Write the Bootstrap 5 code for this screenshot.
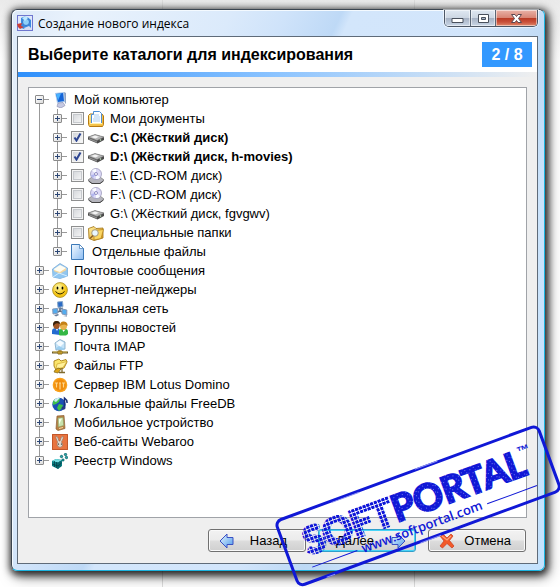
<!DOCTYPE html>
<html lang="ru">
<head>
<meta charset="utf-8">
<meta name="viewport" content="width=device-width, initial-scale=1">
<title>Создание нового индекса</title>
<link href="https://cdn.jsdelivr.net/npm/bootstrap@5.3.0/dist/css/bootstrap.min.css" rel="stylesheet">
<style>
body{font-family:"Liberation Sans",Arial,sans-serif;font-size:13px;line-height:19px;color:#000;padding:9px 15px 16px 11px;overflow:hidden;
 background:linear-gradient(90deg,transparent 162px,#ddd 162px,#ddd 163px,transparent 163px,transparent 414px,#ddd 414px,#ddd 415px,transparent 415px) no-repeat,linear-gradient(#eaeaea,#fff 60px,#fff)}
.win{border:1px solid #3b4550;border-right-color:#1bb4e0;border-bottom-color:#1bb4e0;border-radius:6px;padding:0 6px 6px 5px;
 background:linear-gradient(115deg,#dce9f8 0,#e9f2fc 60px,#dbeafb 200px,#cfe3fa 250px,#bed9f6 300px,#d3e6fb 310px,#d2e5fb 440px,#bdd9f5 500px,#cbe3fb 560px,#c4e2fd 100%);
 box-shadow:inset 1px 1px 0 #f4faff,1px 2px 7px 2px rgba(0,0,0,.72),3px 5px 14px rgba(0,0,0,.55)}
.titlebar{height:26px;font-family:"Open Sans","Noto Sans",sans-serif;font-size:12px}
.app{margin-right:5px}
.caps{height:17px;border:1px solid #4c5766;border-top:0;border-radius:0 0 5px 5px;overflow:hidden;box-shadow:0 0 0 1px rgba(255,255,255,.55)}
.caps button{border:0;padding:0;width:25px;background:linear-gradient(#dfe8f2,#cdd7e3 48%,#a5b1c3 50%,#c9d6e6);box-shadow:inset 0 0 0 1px rgba(255,255,255,.5)}
.caps button+button{border-left:1px solid #5a6676}
.caps .shut{width:42px;background:linear-gradient(#e9b3a8,#d88575 48%,#b83a24 50%,#c9503a 75%,#e08a6c)}
.pane{border:1px solid #5f6b79;background:#efefef}
.head{background:#fff;height:35px;padding:0 5px 0 10px}
.head h1{font-size:16px;line-height:24px}
.step{background:#39f;color:#fff;font-size:16px;line-height:25px;width:50px}
.stripe{height:5px;background:linear-gradient(90deg,#2f90fb,#8cc4ff 50%,#efefef)}
.work{padding:10px}
.tree{border:1px solid #a0a3a8;background:#fff;padding:2px 6px;min-height:300px}
.tree ul{list-style:none;margin:0;padding:0}
.tree ul ul{padding-left:18px;background:linear-gradient(#999,#999) 4px 0/1px 100% no-repeat}
.line{height:19px;font-size:13px;line-height:18px}
.knot{width:17px;height:19px;flex:none;padding-top:5px;background:linear-gradient(#999,#999) 4px 0/1px 19px no-repeat,linear-gradient(#999,#999) 4px 9px/10px 1px no-repeat}
.root>li:first-child>.line .knot{background-position:4px 9px,4px 9px}
.root>li:last-child .knot,.root ul li:last-child .knot{background-size:1px 9px,10px 1px}
.root>li:first-child>ul>li:first-child>.line .knot{background-position:4px 0,4px 9px}
.fold{width:9px;height:9px;border:1px solid #8b8b8b;border-radius:1px;padding:0;display:block;
 background:linear-gradient(#2c4674,#2c4674) 1px 3px/5px 1px no-repeat,linear-gradient(#2c4674,#2c4674) 3px 1px/1px 5px no-repeat,linear-gradient(135deg,#fff,#dcdcdc)}
.fold.open{background:linear-gradient(#2c4674,#2c4674) 1px 3px/5px 1px no-repeat,linear-gradient(135deg,#fff,#dcdcdc)}
.tick{appearance:none;width:13px;height:13px;margin:0 4px 0 1px;flex:none;border:1px solid #8e8f8f;box-shadow:inset 0 0 0 1px #f4f4f4,inset 0 0 0 2px #c6c9cd;background:linear-gradient(135deg,#cfd2d6,#fbfbfb)}
.tick:checked{box-shadow:inset 0 0 0 1px #f4f4f4;background:url("data:image/svg+xml,%3Csvg xmlns='http://www.w3.org/2000/svg' viewBox='0 0 11 11'%3E%3Cpath d='M2.500 5.500 4.500 8.500 8.500 1.500' fill='none' stroke='%232d4591' stroke-width='2'/%3E%3C/svg%3E"),linear-gradient(135deg,#cfd2d6,#fbfbfb)}
.pic{width:16px;height:16px;flex:none;margin-right:6px}
.foot{padding:1px 11px 11px}
.cmd{width:98px;height:23px;border:1px solid #707070;border-radius:3px;padding:0 14px 0 10px;font-size:13px;line-height:19px;color:#000;background:linear-gradient(#f2f2f2,#ebebeb 49%,#dddddd 51%,#cfcfcf);box-shadow:inset 0 0 0 1px #fafafa}
.cmd.next{border-color:#2f9fcb;box-shadow:inset 0 0 0 1px #48d4f7;padding:0 9px 0 17px}
.cmd.back{padding-right:18px}
.stamp{position:absolute;right:0;bottom:0;width:290px;height:167px;pointer-events:none}
.stamp .big{font-family:"Lato",sans-serif;font-weight:700;font-size:37px}
.stamp .site{font-family:"Open Sans",sans-serif;font-weight:600;font-size:13px}
.stamp .mark-tm{font-family:"Liberation Sans",sans-serif;font-weight:700;font-size:13px}
</style>
<script src="https://cdn.jsdelivr.net/npm/bootstrap@5.3.0/dist/js/bootstrap.bundle.min.js"></script>
</head>
<body class="d-flex flex-column min-vh-100 position-relative">
<svg width="0" height="0" class="position-absolute" aria-hidden="true">
<defs>
<linearGradient id="gb" x2="1" y2="1"><stop stop-color="#e8f6ff"/><stop offset="1" stop-color="#4f9bea"/></linearGradient>
<linearGradient id="gf" x2="1" y2="1"><stop stop-color="#f4faff"/><stop offset="1" stop-color="#8cbcf2"/></linearGradient>
<linearGradient id="gy" x2="1" y2="1"><stop stop-color="#fff0a0"/><stop offset="1" stop-color="#e9a21c"/></linearGradient>
<radialGradient id="gs" cx=".4" cy=".3"><stop stop-color="#fffbb0"/><stop offset="1" stop-color="#f4c414"/></radialGradient>
<symbol id="pc" viewBox="0 0 16 16"><path d="M3 1 12 0 13 10 5 11Z" fill="#a9c9ee"/><path d="M4 2 11 1 12 9 6 10Z" fill="#1565d8"/><path d="M4 2 9 1.500 6 8.500Z" fill="#48b2ff"/><path d="M12 0 14 1 14 11 13 12Z" fill="#8fa4c4"/><path d="M6 11 11 10.500 12 12 13 13.500 9 16 5 14.500Z" fill="#c6c9e2" stroke="#8588ad" stroke-width=".6"/></symbol>
<symbol id="docs" viewBox="0 0 16 16"><path d="M.5 4.500 2 3h12l1.500 2v8.500l-1 2h-13l-1-2Z" fill="url(#gy)" stroke="#b67a12"/><path d="M3.500 12.500v-9h2v-3h6l2 2v10Z" fill="#fff" stroke="#4d8fd6"/><path d="M6 4h5M6 6h6M5 8h7M5 10h7" stroke="#a9cdf2"/><path d="M1 12h14v2.500H1Z" fill="#f5c44a"/><path d="M2 12.500h12" stroke="#fff2b5"/></symbol>
<symbol id="hdd" viewBox="0 0 16 16"><path d="M0 7 7 4.500 16 7V10L9.500 13.500 0 9.500Z" fill="#4a4a4a"/><path d="M0 7 7 4.500 16 7 9 10.500Z" fill="#b5b5b5" stroke="#777" stroke-width=".5"/><path d="M3 7 7 5.500 11 6.700 7.500 8.400Z" fill="#f3f3f3"/><path d="M1 8 9 11.300V12.700L1 9.500Z" fill="#8e8e8e"/><circle cx="12.500" cy="10" r=".8" fill="#c9e8c6"/></symbol>
<symbol id="cd" viewBox="0 0 16 16"><path d="M0 12 4 9h8l4 3-4 3.500H4Z" fill="#b4b4bc" stroke="#777" stroke-width=".7"/><path d="M.5 13 4 15.500h8L15.500 13" fill="none" stroke="#444"/><circle cx="8" cy="6" r="5.500" fill="#dcd9f6" stroke="#9a98ba" stroke-width=".8"/><path d="M8 6 4 2.500A5 5 0 0 1 8 1ZM8 6 12 9.500A5 5 0 0 1 8 11Z" fill="#f9fcff"/><path d="M8 6 3 7A5 5 0 0 0 5 10Z" fill="#b2b7ef"/><circle cx="8" cy="6" r="1.500" fill="#fff" stroke="#7773b2" stroke-width=".8"/></symbol>
<symbol id="spec" viewBox="0 0 16 16"><path d="M.5 3.500 6 1.500 8 3.500 15 3v10l-9 2.500-5-2Z" fill="url(#gy)" stroke="#9d6e10" stroke-width=".8"/><path d="M6 5.500 15.500 4.500 13 13.500 6 15Z" fill="#fbd663" stroke="#af7b16" stroke-width=".7"/><circle cx="7" cy="8" r="3.300" fill="#e9f6ff" stroke="#a99b7a"/><path d="m5 10.500-3 3" stroke="#8c5d25" stroke-width="1.600"/></symbol>
<symbol id="file" viewBox="0 0 16 16"><path d="M1.500.500h8l4 4v11h-12Z" fill="url(#gf)" stroke="#3c79b8"/><path d="M9.500.500v4h4Z" fill="#fff" stroke="#3c79b8" stroke-width=".7"/></symbol>
<symbol id="mail" viewBox="0 0 16 16"><path d="M.5 6 8 .500 15.500 5v8L8 15.500 1 14Z" fill="#a5cdf0" stroke="#6ba3d3" stroke-width=".7"/><path d="M2 6 8 2l6 3-1 5H3Z" fill="#fffdf2"/><path d="m2 7 6 2 6-4v4l-5 3-7-3Z" fill="#f8d79a"/><path d="M.7 7.500 8 10.500l7.300-4v7l-7 2L1 14Z" fill="#8cc4f1" opacity=".85"/><path d="m1 14 6-4 8 3" fill="none" stroke="#d6eeff"/></symbol>
<symbol id="smile" viewBox="0 0 16 16"><circle cx="8" cy="8" r="7.400" fill="url(#gs)" stroke="#a78b1e" stroke-width=".8"/><ellipse cx="5.500" cy="6" rx=".9" ry="1.500"/><ellipse cx="10.500" cy="6" rx=".9" ry="1.500"/><path d="M3.500 9.500q4.500 5 9 0" fill="none" stroke="#2c2300"/></symbol>
<symbol id="lan" viewBox="0 0 16 16"><path d="M8 6v4L3 12m5-2 5 2" stroke="#5c6c80" stroke-width="1.500" fill="none"/><path d="m5.500 1 5-.500.5 5-5 1Z" fill="#2b6bc5" stroke="#88a8ca"/><path d="m.7 8 4.800-.5.500 4.500-5 1Z" fill="#53adf0" stroke="#8498b6"/><path d="m10 8 4.800 1v5L10 13Z" fill="#53adf0" stroke="#8498b6"/><path d="m2 14 4-1 1 1-3 1.500ZM11 15l4-.5v1ZM6 7.500l5-1v1L8 9Z" fill="#687d99"/></symbol>
<symbol id="news" viewBox="0 0 16 16"><path d="M0 14V11q0-3 4-3t4 3v4Z" fill="#246bd0"/><path d="M7 15v-4q0-2 4-2.500 5 0 5 3V14l-2 1.500H8Z" fill="#35b845"/><ellipse cx="4.500" cy="5" rx="3.300" ry="4" fill="#a35726"/><path d="M1 5Q1 1 4.500 1T8 4Q5 2.500 3 4L1.500 6Z" fill="#38220d"/><ellipse cx="11.500" cy="6" rx="3.500" ry="4" fill="#e9b34d"/><path d="M8 6q0-5 4-4.500T15.500 6Q13 3.500 10 5Z" fill="#c58116"/><path d="m4 9 1 2 1-2ZM10.500 10l1 2 1.500-2Z" fill="#fff"/></symbol>
<symbol id="imap" viewBox="0 0 16 16"><path d="m3 4 5-3.500L13 3v7l-9 1Z" fill="#c3e2f7" stroke="#7fa6c2" stroke-width=".8"/><path d="m4 4 4-2.500L12 4 8 8Z" fill="#f5fbff"/><path d="m3 10 4-3 6 3-2 1Z" fill="#9cceef"/><path d="M0 13.500h16" stroke="#6c5a2b" stroke-width="2"/><path d="M1 13h14" stroke="#d9bd57"/><path d="M8 11v4M6 12h4v3H6Z" stroke="#8c6e1d" fill="#f5c534"/></symbol>
<symbol id="ftp" viewBox="0 0 16 16"><path d="m2 3 5-2 2 2 5-1.500L15 4l-3 6-8 2-2-4Z" fill="#fbe66c" stroke="#a87e14" stroke-width=".9"/><path d="M5 6 15 3.500 11 9.500 4 11Z" fill="#fff19a" stroke="#c79b20" stroke-width=".6"/><path d="m3 12 3-2 3 1-3 4-4-1Z" fill="#dca516" stroke="#7c6314" stroke-width=".7"/><path d="M7 14.500h6M10 10v4" stroke="#7f6a2e" stroke-width="1.300"/></symbol>
<symbol id="lotus" viewBox="0 0 16 16"><circle cx="8" cy="8" r="7.300" fill="#f9a11b"/><circle cx="8" cy="8" r="5.800" fill="#f08c0c"/><path d="M3 6h3M7 6h2M10 6h3M4.500 6.500v4M8 6.500v6M11.500 6.500v4" stroke="#ffd78a" stroke-width="1.200"/></symbol>
<symbol id="freedb" viewBox="0 0 16 16"><circle cx="7" cy="8.500" r="6.700" fill="#1c50b5"/><path d="M2 4q3-3 6-1L7 6 4 8 1 9q-1-3 1-5ZM7 8l4 1-1 3-3 3-2-3Z" fill="#3ec14a"/><path d="M3 3q3-2 5-1l-4 4-2-1Z" fill="#c8edf5"/><path d="M12.500 12V2q3 2 2.500 5" fill="none" stroke="#192f79" stroke-width="1.500"/><ellipse cx="11.500" cy="12" rx="2" ry="1.600" fill="#253984"/></symbol>
<symbol id="phone" viewBox="0 0 16 16"><path d="m5 1 7-.500 1 13L6 15.500 4 14Z" fill="#b98143" stroke="#8a5f33" stroke-width=".7"/><path d="m6 3 5-.500.700 8L6.300 12Z" fill="#c8e2ad" stroke="#8a9c62" stroke-width=".6"/><path d="m7 4 3-.500-3 6Z" fill="#f5ffe8"/><path d="m7 13.500 4-1" stroke="#f5d8a5"/></symbol>
<symbol id="web" viewBox="0 0 16 16"><path d="M0 0h16v16H0Z" fill="#e8743f"/><path d="M.5.500h15v15H.500Z" fill="none" stroke="#c2572a"/><path d="M5.500 8Q3 3 4 2q2 0 3 5h1q1-5 3-5 1 2-1.500 6 2 2 1 4-2.500 3-5 0-1-2 0-4Z" fill="#ded8cd" stroke="#94674f" stroke-width=".6"/><circle cx="6.500" cy="10" r=".6"/><circle cx="9.500" cy="10" r=".6"/></symbol>
<symbol id="reg" viewBox="0 0 16 16"><path d="m0 8 4-2 6 1v6l-4 3-6-3Z" fill="#087f84"/><path d="m0 8 4-2 6 1-4 2.500Z" fill="#73dce0"/><path d="M2.500 8v6M4.500 9v6M8 8v6M0 11l6 2 4-3.500M6 9v7" stroke="#063b43" stroke-width=".7" fill="none"/><path d="m8 3 2-1 1 2-2 1ZM12 1l2-1 1 2-2 1ZM13 4l2-1 1 2-2 1ZM10 6h2v2h-2Z" fill="#25a9ad" stroke="#07575c" stroke-width=".6"/></symbol>
</defs>
</svg>

<main class="win d-flex flex-column flex-fill">
<header class="titlebar d-flex">
<div class="d-flex align-items-center flex-fill">
<svg class="app flex-shrink-0" width="16" height="16" viewBox="0 0 16 16" aria-hidden="true"><path d="M0 0h16v16H0Z" fill="#6f77cf"/><path d="M1 1h14v14H1Z" fill="#dfe8fb"/><path d="M4 3q5-4 10 2v8l-4 2-6-2Z" fill="#3b8be0"/><circle cx="9" cy="7" r="3.500" fill="#8fd0f8" stroke="#3574ca"/><path d="m5 3 4-2 2 2-3 3Z" fill="#bde7fd"/><path d="m0 9 5-1-1 3 3 1-4 2-2-2Z" fill="#cf3e35"/><path d="m7 13 5-2 3 3v1H8Z" fill="#d8dcf2"/></svg>
<span>Создание нового индекса</span></div>
<div class="caps d-flex">
<button type="button" aria-label="Свернуть"><svg class="d-block mx-auto" width="13" height="16" viewBox="0 0 13 16"><path d="M1 8.500h11v4H1Z" fill="#fff" stroke="#49505c"/></svg></button>
<button type="button" aria-label="Развернуть"><svg class="d-block mx-auto" width="13" height="16" viewBox="0 0 13 16"><path d="M1.500 4.500h10v8h-10Zm3 3v2h4v-2Z" fill="#fff" fill-rule="evenodd" stroke="#49505c"/></svg></button>
<button type="button" class="shut" aria-label="Закрыть"><svg class="d-block mx-auto" width="13" height="16" viewBox="0 0 13 16"><path d="M1.500 4.500H5l1.500 2 1.500-2h3.500L8.500 8.500l3 4H8l-1.500-2-1.500 2H1.500l3-4Z" fill="#fff" stroke="#5d4850"/></svg></button>
</div>
</header>
<section class="pane d-flex flex-column flex-fill">
<div class="head d-flex justify-content-between align-items-center"><h1 class="fw-bold m-0">Выберите каталоги для индексирования</h1><div class="step fw-bold text-center">2 / 8</div></div>
<div class="stripe"></div>
<div class="work d-flex flex-column flex-fill">
<div class="tree flex-fill">
<ul class="root">
<li><div class="line d-flex align-items-center"><span class="knot"><button type="button" class="fold open" aria-label="Свернуть ветвь"></button></span><svg class="pic"><use href="#pc"/></svg><span>Мой компьютер</span></div>
<ul>
<li><div class="line d-flex align-items-center"><span class="knot"><button type="button" class="fold" aria-label="Развернуть"></button></span><input class="tick" type="checkbox" id="c1"><svg class="pic"><use href="#docs"/></svg><label for="c1">Мои документы</label></div></li>
<li><div class="line d-flex align-items-center"><span class="knot"><button type="button" class="fold" aria-label="Развернуть"></button></span><input class="tick" type="checkbox" id="c2" checked><svg class="pic"><use href="#hdd"/></svg><label for="c2" class="fw-bold">C:\ (Жёсткий диск)</label></div></li>
<li><div class="line d-flex align-items-center"><span class="knot"><button type="button" class="fold" aria-label="Развернуть"></button></span><input class="tick" type="checkbox" id="c3" checked><svg class="pic"><use href="#hdd"/></svg><label for="c3" class="fw-bold">D:\ (Жёсткий диск, h-movies)</label></div></li>
<li><div class="line d-flex align-items-center"><span class="knot"><button type="button" class="fold" aria-label="Развернуть"></button></span><input class="tick" type="checkbox" id="c4"><svg class="pic"><use href="#cd"/></svg><label for="c4">E:\ (CD-ROM диск)</label></div></li>
<li><div class="line d-flex align-items-center"><span class="knot"><button type="button" class="fold" aria-label="Развернуть"></button></span><input class="tick" type="checkbox" id="c5"><svg class="pic"><use href="#cd"/></svg><label for="c5">F:\ (CD-ROM диск)</label></div></li>
<li><div class="line d-flex align-items-center"><span class="knot"><button type="button" class="fold" aria-label="Развернуть"></button></span><input class="tick" type="checkbox" id="c6"><svg class="pic"><use href="#hdd"/></svg><label for="c6">G:\ (Жёсткий диск, fgvgwv)</label></div></li>
<li><div class="line d-flex align-items-center"><span class="knot"><button type="button" class="fold" aria-label="Развернуть"></button></span><input class="tick" type="checkbox" id="c7"><svg class="pic"><use href="#spec"/></svg><label for="c7">Специальные папки</label></div></li>
<li><div class="line d-flex align-items-center"><span class="knot"><button type="button" class="fold" aria-label="Развернуть"></button></span><svg class="pic"><use href="#file"/></svg><span>Отдельные файлы</span></div></li>
</ul></li>
<li><div class="line d-flex align-items-center"><span class="knot"><button type="button" class="fold" aria-label="Развернуть"></button></span><svg class="pic"><use href="#mail"/></svg><span>Почтовые сообщения</span></div></li>
<li><div class="line d-flex align-items-center"><span class="knot"><button type="button" class="fold" aria-label="Развернуть"></button></span><svg class="pic"><use href="#smile"/></svg><span>Интернет-пейджеры</span></div></li>
<li><div class="line d-flex align-items-center"><span class="knot"><button type="button" class="fold" aria-label="Развернуть"></button></span><svg class="pic"><use href="#lan"/></svg><span>Локальная сеть</span></div></li>
<li><div class="line d-flex align-items-center"><span class="knot"><button type="button" class="fold" aria-label="Развернуть"></button></span><svg class="pic"><use href="#news"/></svg><span>Группы новостей</span></div></li>
<li><div class="line d-flex align-items-center"><span class="knot"><button type="button" class="fold" aria-label="Развернуть"></button></span><svg class="pic"><use href="#imap"/></svg><span>Почта IMAP</span></div></li>
<li><div class="line d-flex align-items-center"><span class="knot"><button type="button" class="fold" aria-label="Развернуть"></button></span><svg class="pic"><use href="#ftp"/></svg><span>Файлы FTP</span></div></li>
<li><div class="line d-flex align-items-center"><span class="knot"><button type="button" class="fold" aria-label="Развернуть"></button></span><svg class="pic"><use href="#lotus"/></svg><span>Сервер IBM Lotus Domino</span></div></li>
<li><div class="line d-flex align-items-center"><span class="knot"><button type="button" class="fold" aria-label="Развернуть"></button></span><svg class="pic"><use href="#freedb"/></svg><span>Локальные файлы FreeDB</span></div></li>
<li><div class="line d-flex align-items-center"><span class="knot"><button type="button" class="fold" aria-label="Развернуть"></button></span><svg class="pic"><use href="#phone"/></svg><span>Мобильное устройство</span></div></li>
<li><div class="line d-flex align-items-center"><span class="knot"><button type="button" class="fold" aria-label="Развернуть"></button></span><svg class="pic"><use href="#web"/></svg><span>Веб-сайты Webaroo</span></div></li>
<li><div class="line d-flex align-items-center"><span class="knot"><button type="button" class="fold" aria-label="Развернуть"></button></span><svg class="pic"><use href="#reg"/></svg><span>Реестр Windows</span></div></li>
</ul>
</div>
</div>
<div class="foot d-flex justify-content-end gap-2">
<button type="button" class="cmd back d-flex align-items-center justify-content-between me-1"><svg width="16" height="16" viewBox="0 0 16 16"><path d="M1 8 8 1v3.500h6v7H8V15Z" fill="url(#gb)" stroke="#3a50c4"/></svg>Назад</button>
<button type="button" class="cmd next d-flex align-items-center justify-content-between me-1">Далее<svg width="16" height="16" viewBox="0 0 16 16"><path d="M15 8 8 1v3.500H2v7h6V15Z" fill="url(#gb)" stroke="#3a50c4"/></svg></button>
<button type="button" class="cmd d-flex align-items-center justify-content-between"><svg width="16" height="16" viewBox="0 0 16 16"><path d="M1 3 4 1l4 4 4-4 2 2-3.500 4.500L15 13l-2 2-5-4.500L3.500 15 1 13l4-5Z" fill="#f25a29" stroke="#c83a1c" stroke-width=".7"/><path d="m3 3 5 4 4-4" stroke="#ffa47b" stroke-width="1.200" fill="none"/></svg>Отмена</button>
</div>
</section>
</main>

<svg class="stamp" viewBox="270 420 290 167" role="img" aria-label="SoftPortal">
<defs><pattern id="dots" width="4" height="4" patternUnits="userSpaceOnUse"><path d="M0 0h3v3H0Z" fill="#0d14d8"/></pattern>
<pattern id="ink" width="9" height="7" patternUnits="userSpaceOnUse"><path d="M0 0h9v7H0Z" fill="#1018d6"/><path d="M1 1h1v1H1ZM5 2h1v1H5ZM3 5h1v1H3ZM7 4h1v1H7ZM8 0h1v1H8Z" fill="#6f75ec"/></pattern></defs>
<g transform="translate(274 521) rotate(-20.200)" fill="#1018d6">
<rect x="1" y="1" width="279" height="69" rx="6" fill="none" stroke="#1018d6" stroke-width="3"/>
<path d="M60 2.500h30M150 0h24M130 71.200h22M30 71h9" stroke="#8f94f2" stroke-width="1"/>
<text class="big" x="21" y="44" fill="url(#dots)" stroke="url(#dots)" stroke-width="3">SOFT</text>
<text class="big" x="115" y="44" fill="url(#ink)" stroke="url(#ink)" stroke-width="2">PORTAL</text>
<text class="mark-tm" x="252" y="24">™</text>
<text class="site" x="73" y="61">www.softportal.com</text>
<path d="M20 56.500h48M206 57.500h53" stroke="#1018d6" fill="none"/>
</g>
</svg>
</body>
</html>
